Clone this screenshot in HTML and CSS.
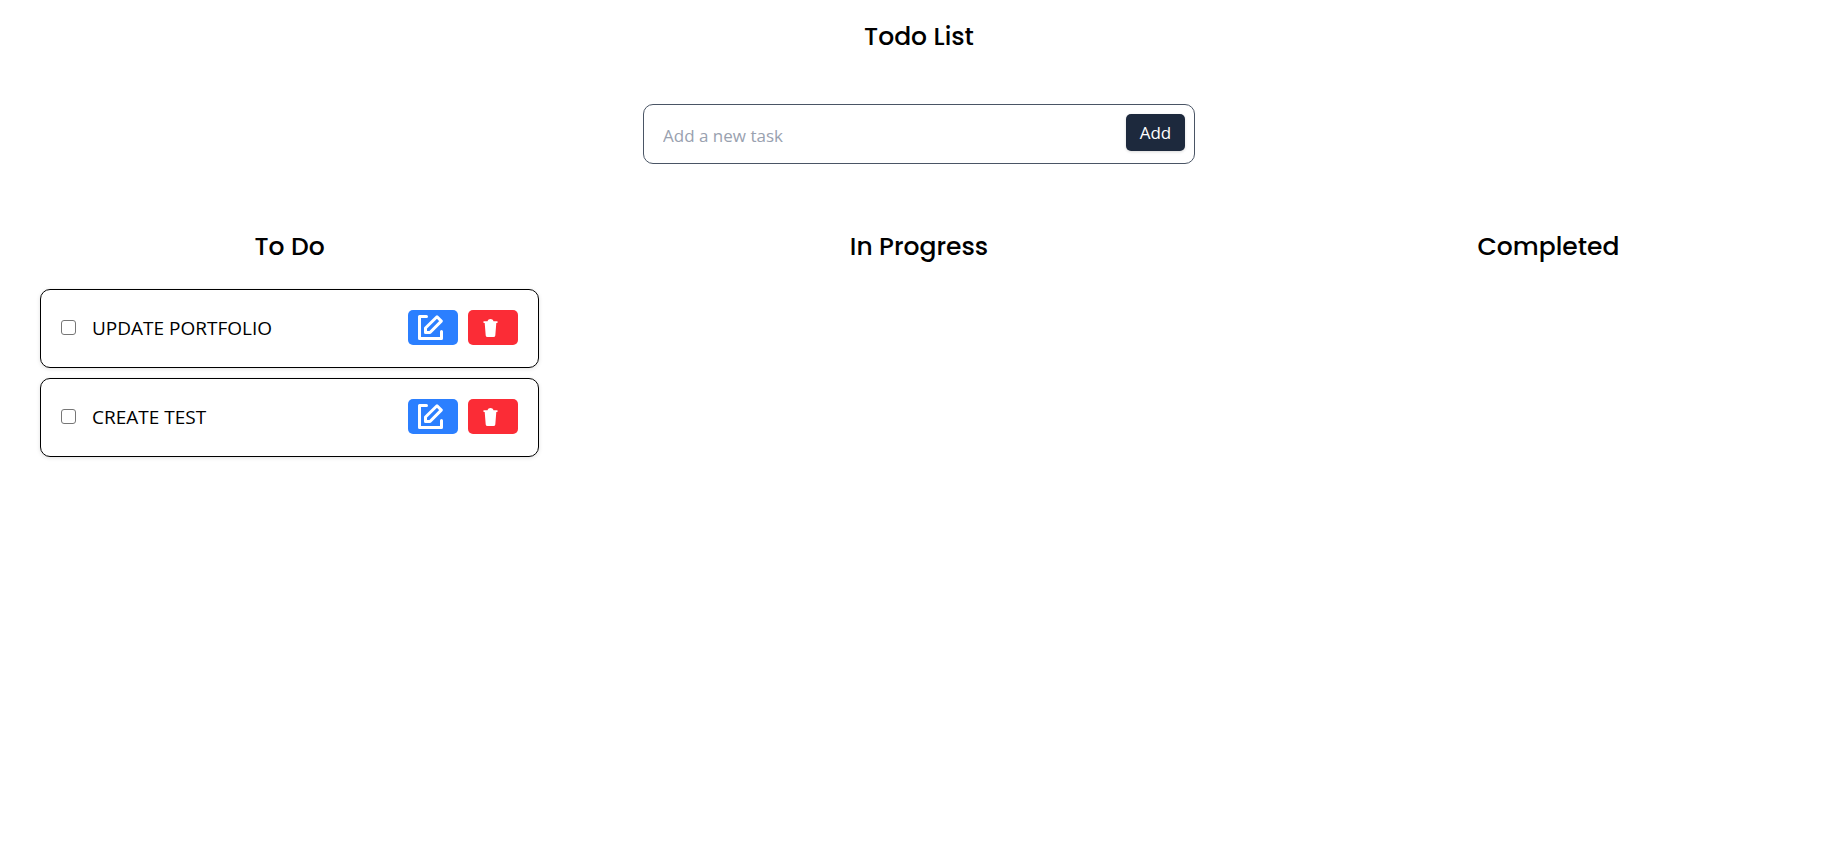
FILE: index.html
```html
<!DOCTYPE html>
<html lang="en">
<head>
<meta charset="utf-8">
<title>Todo List</title>
<link rel="stylesheet" href="styles.css">
</head>
<body>
<svg class="sprite" aria-hidden="true">
  <symbol id="edit" viewBox="0 0 25 25">
    <path d="M8.500 1.500H1.500V23.500H23.500V16.500" fill="none" stroke="currentColor" stroke-width="3" stroke-linecap="round" stroke-linejoin="round"/>
    <path d="M7.500 17.500V13L19 1.800L23.300 6.100L12 17.500Z" fill="none" stroke="currentColor" stroke-width="3" stroke-linejoin="round"/>
  </symbol>
  <symbol id="trash" viewBox="0 0 15 18">
    <path d="M0.500 2.200H4.500C5 .8 6 0 7.500 0S10 .8 10.500 2.200H14.500V4H13.300L12.300 16.500Q12.100 18 10.500 18H4.500Q2.900 18 2.700 16.500L1.700 4H.5Z" fill="currentColor"/>
  </symbol>
</svg>
<main class="page">
  <h1 class="heading">Todo List</h1>
  <form class="add-form">
    <input class="add-input" type="text" placeholder="Add a new task" aria-label="New task">
    <button class="add-button" type="button">Add</button>
  </form>
  <div class="board">
    <section class="column">
      <h2 class="heading">To Do</h2>
      <ul class="tasks">
        <li class="task">
          <input class="check" type="checkbox" id="task-1">
          <label class="name" for="task-1">UPDATE PORTFOLIO</label>
          <button class="action edit" type="button" aria-label="Edit"><svg class="edit-icon"><use href="#edit"/></svg></button>
          <button class="action delete" type="button" aria-label="Delete"><svg class="trash-icon"><use href="#trash"/></svg></button>
        </li>
        <li class="task">
          <input class="check" type="checkbox" id="task-2">
          <label class="name" for="task-2">CREATE TEST</label>
          <button class="action edit" type="button" aria-label="Edit"><svg class="edit-icon"><use href="#edit"/></svg></button>
          <button class="action delete" type="button" aria-label="Delete"><svg class="trash-icon"><use href="#trash"/></svg></button>
        </li>
      </ul>
    </section>
    <section class="column"><h2 class="heading">In Progress</h2></section>
    <section class="column"><h2 class="heading">Completed</h2></section>
  </div>
</main>
</body>
</html>
```
FILE: styles.css
```css
* { box-sizing: border-box; margin: 0; padding: 0; }
body { background: #fff; color: #000; font: 17px/30px "Segoe UI", "Open Sans", sans-serif; }
button, input { font: inherit; }
.sprite { position: absolute; width: 0; height: 0; }
.page { padding: 19px 44px 40px 40px; }
.heading { font: 500 25px/36px Poppins, Inter, sans-serif; text-align: center; }
.add-form {
  display: flex; align-items: flex-start; width: 552px; max-width: 100%; margin: 49px auto 65px;
  padding: 9px; border: 1px solid #4a5565; border-radius: 10px;
}
.add-input { flex: 1; min-width: 0; height: 40px; padding: 3px 0 0 10px; border: 0; outline: 0; background: none; }
.add-input::placeholder { color: #99a1af; opacity: 1; }
.add-button {
  width: 59px; height: 37px; border: 0; border-radius: 5px; background: #1d293d; color: #fff;
  box-shadow: 0 1px 3px rgb(0 0 0 / 15%);
}
.board { display: grid; grid-template-columns: repeat(3, minmax(0, 499px)); justify-content: space-between; }
.column { min-width: 0; }
.tasks { display: flex; flex-direction: column; gap: 10px; margin-top: 24px; list-style: none; }
.task {
  display: flex; align-items: flex-start; gap: 10px; padding: 20px 20px 22px;
  border: 1px solid #000; border-radius: 10px; box-shadow: 0 1px 4px rgb(0 0 0 / 12%);
}
.check {
  appearance: none; width: 15px; height: 15px; margin: 10px 6px 0 0;
  border: 1px solid #767676; border-radius: 3px; background: #fff;
}
.check:checked { background: #2b7fff; }
.name { flex: 1; padding-top: 3px; font-size: 19px; }
.action { display: flex; align-items: center; width: 50px; height: 35px; border: 0; border-radius: 5px; color: #fff; }
.edit { padding-left: 10px; background: #2b7fff; }
.delete { padding-left: 15px; background: #fb2c36; }
.edit-icon { width: 25px; height: 25px; }
.trash-icon { width: 15px; height: 18px; }
```
